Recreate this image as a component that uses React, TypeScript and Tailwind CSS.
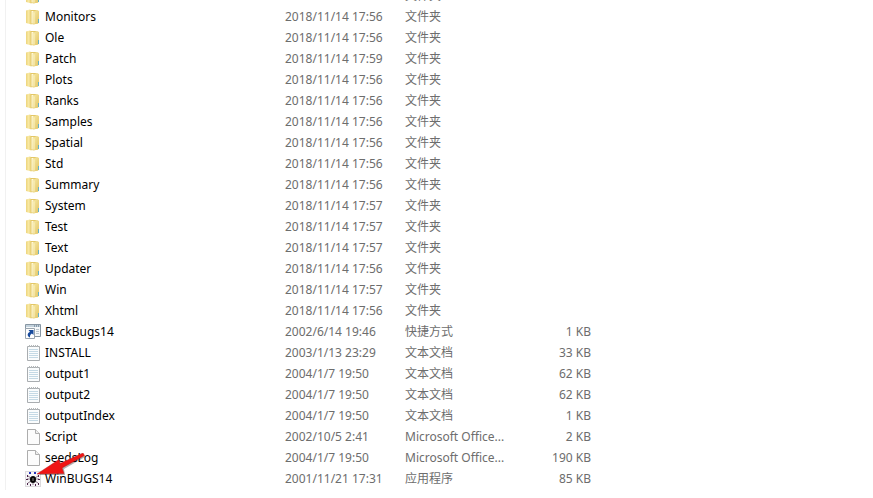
import React from "react";

type FileKind = "folder" | "shortcut" | "text" | "blank" | "bug";

interface FileRow {
  name: string;
  date: string;
  type: string;
  size?: string;
  kind: FileKind;
}

const folder = (name: string, time: string): FileRow => ({
  name,
  date: `2018/11/14 ${time}`,
  type: "文件夹",
  kind: "folder",
});

const files: FileRow[] = [
  folder("Models", "17:56"),
  folder("Monitors", "17:56"),
  folder("Ole", "17:56"),
  folder("Patch", "17:59"),
  folder("Plots", "17:56"),
  folder("Ranks", "17:56"),
  folder("Samples", "17:56"),
  folder("Spatial", "17:56"),
  folder("Std", "17:56"),
  folder("Summary", "17:56"),
  folder("System", "17:57"),
  folder("Test", "17:57"),
  folder("Text", "17:57"),
  folder("Updater", "17:56"),
  folder("Win", "17:57"),
  folder("Xhtml", "17:56"),
  { name: "BackBugs14", date: "2002/6/14 19:46", type: "快捷方式", size: "1 KB", kind: "shortcut" },
  { name: "INSTALL", date: "2003/1/13 23:29", type: "文本文档", size: "33 KB", kind: "text" },
  { name: "output1", date: "2004/1/7 19:50", type: "文本文档", size: "62 KB", kind: "text" },
  { name: "output2", date: "2004/1/7 19:50", type: "文本文档", size: "62 KB", kind: "text" },
  { name: "outputIndex", date: "2004/1/7 19:50", type: "文本文档", size: "1 KB", kind: "text" },
  { name: "Script", date: "2002/10/5 2:41", type: "Microsoft Office...", size: "2 KB", kind: "blank" },
  { name: "seedsLog", date: "2004/1/7 19:50", type: "Microsoft Office...", size: "190 KB", kind: "blank" },
  { name: "WinBUGS14", date: "2001/11/21 17:31", type: "应用程序", size: "85 KB", kind: "bug" },
];

const FolderIcon = () => (
  <svg className="size-4 shrink-0" viewBox="0 0 16 16" aria-hidden="true">
    <defs>
      <linearGradient id="folder-left" x1="0" x2="1" y1="0" y2="0">
        <stop offset="0" stopColor="#edd47a" />
        <stop offset="0.5" stopColor="#f9eaa6" />
        <stop offset="1" stopColor="#e2c562" />
      </linearGradient>
      <linearGradient id="folder-right" x1="0" x2="1" y1="0" y2="1">
        <stop offset="0" stopColor="#f8eba8" />
        <stop offset="1" stopColor="#e2c463" />
      </linearGradient>
    </defs>
    <path d="M5 1h6l2 1v12.500l-3 .5H5z" fill="#e3c767" />
    <path d="M5.500 2h3v12.500h-3z" fill="#fffbe2" />
    <path d="M7.500 3L12 1l2 1v12l-5 1.500H7.500z" fill="url(#folder-right)" />
    <path d="M1 1.500L5 .5l1.500 1V15.500L1 14z" fill="url(#folder-left)" />
    <path d="M9 3.500v11" stroke="#fbf3c6" />
    <path d="M13 10h1v4h-1z" fill="#66b1c6" />
  </svg>
);

const ShortcutIcon = () => (
  <svg className="size-4 shrink-0" viewBox="0 0 16 16" aria-hidden="true">
    <path d="M.5.5h15v12H.5z" fill="#f5f8fa" stroke="#8796a3" />
    <path d="M1 1h14v2H1z" fill="#c3d2dd" />
    <path d="M9 2h1m1 0h1m1 0h1" stroke="#4f6478" />
    <path d="M11 5.500h3M11 7.500h3M11 9.500h3" stroke="#bcc7cf" />
    <path d="M.5 4.500h9v10h-9z" fill="#fff" stroke="#98a4ae" />
    <path d="M3.500 6h5v5L6.900 9.600C5.400 10.500 4.900 11.600 5 13.500 1.800 12 2 9.300 5 7.700z" fill="#174a9c" />
  </svg>
);

const PageIcon = ({ lined }: { lined?: boolean }) => (
  <svg className="size-4 shrink-0" viewBox="0 0 16 16" aria-hidden="true">
    {lined ? (
      <>
        <path d="M2.500 1.500h12v14h-12z" fill="#fafcfd" stroke="#a9adb0" />
        <path d="M4.500 0v2m2-2v2m2-2v2m2-2v2m2-2v2" stroke="#b4b8ba" />
        <path d="M4 4.500h9M4 6.500h9M4 8.500h9M4 10.500h9M4 12.500h9" stroke="#c4d9e5" />
      </>
    ) : (
      <>
        <path d="M2.500.5h8l4 4v11h-12z" fill="#fcfcfc" stroke="#adadad" />
        <path d="M10.500.5v4h4" fill="#eee" stroke="#b0b0b0" />
      </>
    )}
  </svg>
);

const BugIcon = () => (
  <svg className="size-4 shrink-0" viewBox="0 0 16 16" aria-hidden="true">
    <path d="M0 0h16v16H0z" fill="#dcdadd" />
    <path d="M1 1h14v14H1z" fill="#f6f5f7" />
    <path d="M3 5l3 2M2 8h4M3 12l3-2M13 5l-3 2M14 8h-4M13 12l-3-2M8 12v2" stroke="#8c7888" />
    <path d="M2 4h1v2H2zM1 8h2v1H1zM2 12h1v2H2zM13 4h1v2h-1zM13 8h2v1h-2zM13 12h1v2h-1zM5 13h1v2H5zM10 13h1v2h-1z" fill="#4b2348" />
    <path d="M4 1h2v2H4zM9 1h2v2H9z" fill="#2433b8" />
    <ellipse cx="8" cy="8.500" rx="3" ry="3.500" fill="#050505" />
    <path d="M7.500 7h1v3h-1z" fill="#888" />
  </svg>
);

const FileIcon = ({ kind }: { kind: FileKind }) => {
  if (kind === "folder") return <FolderIcon />;
  if (kind === "shortcut") return <ShortcutIcon />;
  if (kind === "bug") return <BugIcon />;
  return <PageIcon lined={kind === "text"} />;
};

// Red pointer laid over the program's row
const Pointer = () => (
  <svg className="pointer-events-none absolute bottom-[13px] left-3 h-6 w-12" viewBox="0 0 48 24" aria-hidden="true">
    <path d="M2 22L23 8l1 3L47 2l1 2-21 12 1 6z" fill="#000" opacity="0.3" />
    <path d="M0 21L22 6.500l1 4L46 0l1.500 2.500L25 15l2 5.500z" fill="#f01414" stroke="#b81c1c" strokeWidth="0.5" />
  </svg>
);

const App: React.FC = () => {
  return (
    <main className="overflow-hidden bg-white pl-[5px] pb-2 font-['Noto_Sans','Noto_Sans_CJK_SC',sans-serif] text-xs text-[#6d6d6d]">
      <div className="-mt-[14px] border-l border-[#f1f1f1] pl-[19px]">
        <table className="w-full table-fixed border-collapse text-left">
          <colgroup>
            <col className="w-[260px]" />
            <col className="w-[120px]" />
            <col className="w-[120px]" />
            <col className="w-[66px]" />
            <col />
          </colgroup>
          <tbody>
            {files.map((file) => (
              <tr key={file.name} className="h-[21px] align-top leading-5 whitespace-nowrap">
                <td className="relative p-0 text-black">
                  <div className="flex items-center gap-1">
                    <FileIcon kind={file.kind} />
                    <span>{file.name}</span>
                  </div>
                  {file.kind === "bug" && <Pointer />}
                </td>
                <td className="p-0">{file.date}</td>
                <td className="p-0">{file.type}</td>
                <td className="p-0 text-right">{file.size}</td>
                <td className="p-0" />
              </tr>
            ))}
          </tbody>
        </table>
      </div>
    </main>
  );
};

export default App;
